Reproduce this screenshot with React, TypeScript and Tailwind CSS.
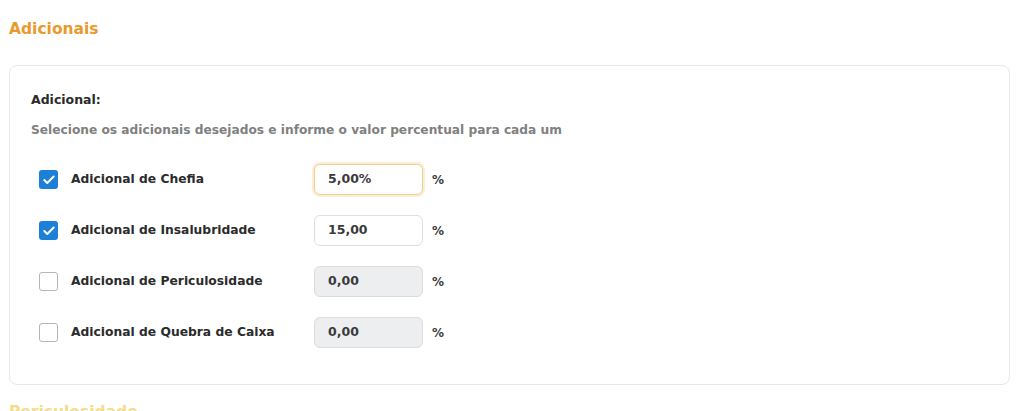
import { Check } from "lucide-react"

type Adicional = {
  label: string
  checked: boolean
  value: string
  focused?: boolean
}

const adicionais: Adicional[] = [
  { label: "Adicional de Chefia", checked: true, value: "5,00%", focused: true },
  { label: "Adicional de Insalubridade", checked: true, value: "15,00" },
  { label: "Adicional de Periculosidade", checked: false, value: "0,00" },
  { label: "Adicional de Quebra de Caixa", checked: false, value: "0,00" },
]

function AdicionalRow({ item }: { item: Adicional }) {
  const inputClass = item.checked
    ? item.focused
      ? "border-[#f1cf91] bg-white shadow-[0_0_0_2px_#fbeed6]"
      : "border-[#dedede] bg-white"
    : "border-[#dcdcdc] bg-[#eceef0]"
  return (
    <div className="flex h-[51px] items-center">
      <div className="flex w-[283px] items-center pl-[8px]">
        <span
          className={
            item.checked
              ? "flex h-[19px] w-[19px] items-center justify-center rounded-[3px] bg-[#1c7fd8]"
              : "h-[19px] w-[19px] rounded-[3px] border border-[#b5b5b5] bg-white"
          }
        >
          {item.checked && <Check size={14} strokeWidth={3.5} className="text-white" />}
        </span>
        <span className="ml-[13px] text-[12.3px] font-bold text-[#2b2b2b]">
          {item.label}
        </span>
      </div>
      <div
        className={`flex h-[31px] w-[109px] items-center rounded-[6px] border px-[13px] text-[12.5px] font-bold text-[#3a3a3a] ${inputClass}`}
      >
        {item.value}
      </div>
      <span className="ml-[9px] text-[12px] font-bold text-[#3a3a3a]">%</span>
    </div>
  )
}

export default function App() {
  return (
    <div
      className="h-[411px] overflow-hidden bg-white pl-[9px] pr-[14px] pt-[18px]"
      style={{ fontFamily: '"DejaVu Sans", sans-serif' }}
    >
      <h2 className="text-[15.5px] font-bold leading-[22px] text-[#e89a2c]">Adicionais</h2>
      <section className="mt-[25px] h-[320px] rounded-[8px] border border-[#e8e8e8] px-[21px] pt-[25px]">
        <p className="text-[12.5px] font-bold leading-[18px] text-[#2a2a2a]">Adicional:</p>
        <p className="mt-[12px] text-[12.2px] font-bold leading-[18px] text-[#808080]">
          Selecione os adicionais desejados e informe o valor percentual para cada um
        </p>
        <div className="mt-[15px]">
          {adicionais.map((item) => (
            <AdicionalRow key={item.label} item={item} />
          ))}
        </div>
      </section>
      <h2 className="mt-[16px] text-[15.5px] font-bold leading-[22px] text-[#f3dc8a]">Periculosidade</h2>
    </div>
  )
}
